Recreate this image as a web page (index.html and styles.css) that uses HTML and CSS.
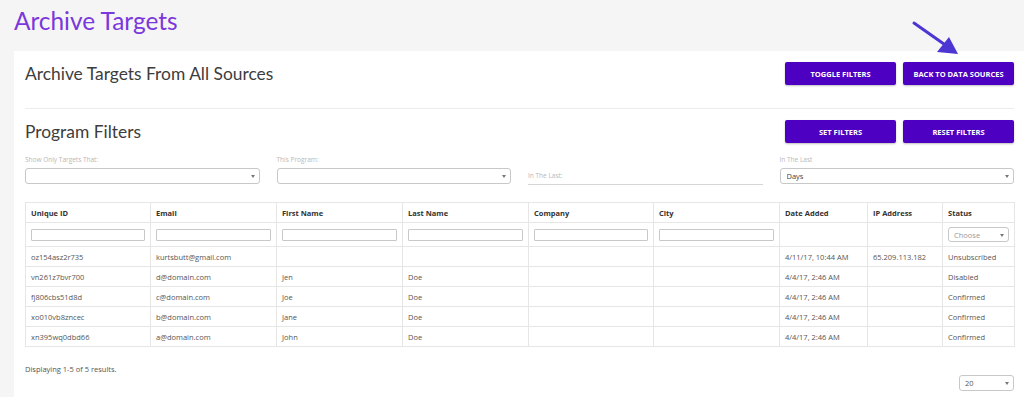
FILE: index.html
```html
<!DOCTYPE html>
<html lang="en">
<head>
<meta charset="utf-8">
<title>Archive Targets</title>
<link rel="stylesheet" href="styles.css">
</head>
<body>
<h1 class="page-title">Archive Targets</h1>
<svg class="pointer-arrow" width="60" height="45" viewBox="0 0 60 45" aria-hidden="true">
  <line x1="3" y1="3" x2="40" y2="29" stroke="#4b36d3" stroke-width="3" stroke-linecap="round"/>
  <polygon points="47,34 26,32 38,17" fill="#4b36d3"/>
</svg>
<main class="card">
  <section class="section-head">
    <h2 class="section-title">Archive Targets From All Sources</h2>
    <div class="btn-group">
      <button class="btn">TOGGLE FILTERS</button>
      <button class="btn">BACK TO DATA SOURCES</button>
    </div>
  </section>
  <section class="section-head filters-head">
    <h2 class="section-title">Program Filters</h2>
    <div class="btn-group">
      <button class="btn">SET FILTERS</button>
      <button class="btn">RESET FILTERS</button>
    </div>
  </section>
  <div class="filters">
    <div class="field">
      <label class="field-label">Show Only Targets That:</label>
      <div class="select-wrap"><select class="select"><option></option></select></div>
    </div>
    <div class="field">
      <label class="field-label">This Program:</label>
      <div class="select-wrap"><select class="select"><option></option></select></div>
    </div>
    <div class="field field-bottom">
      <div class="line-input"><span class="placeholder">In The Last:</span></div>
    </div>
    <div class="field">
      <label class="field-label">In The Last</label>
      <div class="select-wrap"><select class="select dark"><option>Days</option></select></div>
    </div>
  </div>

  <table class="grid">
    <colgroup>
      <col style="width:125px"><col style="width:126px"><col style="width:126px"><col style="width:126px">
      <col style="width:125px"><col style="width:126px"><col style="width:88px"><col style="width:75px"><col style="width:72px">
    </colgroup>
    <thead>
      <tr class="head-row">
        <th>Unique ID</th><th>Email</th><th>First Name</th><th>Last Name</th><th>Company</th><th>City</th><th>Date Added</th><th>IP Address</th><th>Status</th>
      </tr>
      <tr class="filter-row">
        <td><input class="cell-input" type="text"></td>
        <td><input class="cell-input" type="text"></td>
        <td><input class="cell-input" type="text"></td>
        <td><input class="cell-input" type="text"></td>
        <td><input class="cell-input" type="text"></td>
        <td><input class="cell-input" type="text"></td>
        <td></td>
        <td></td>
        <td><div class="select-wrap small"><select class="select"><option>Choose</option></select></div></td>
      </tr>
    </thead>
    <tbody>
      <tr><td>oz154asz2r735</td><td>kurtsbutt@gmail.com</td><td></td><td></td><td></td><td></td><td>4/11/17, 10:44 AM</td><td>65.209.113.182</td><td>Unsubscribed</td></tr>
      <tr><td>vn261z7bvr700</td><td>d@domain.com</td><td>Jen</td><td>Doe</td><td></td><td></td><td>4/4/17, 2:46 AM</td><td></td><td>Disabled</td></tr>
      <tr><td>fj806cbs51d8d</td><td>c@domain.com</td><td>Joe</td><td>Doe</td><td></td><td></td><td>4/4/17, 2:46 AM</td><td></td><td>Confirmed</td></tr>
      <tr><td>xo010vb8zncec</td><td>b@domain.com</td><td>Jane</td><td>Doe</td><td></td><td></td><td>4/4/17, 2:46 AM</td><td></td><td>Confirmed</td></tr>
      <tr><td>xn395wq0dbd66</td><td>a@domain.com</td><td>John</td><td>Doe</td><td></td><td></td><td>4/4/17, 2:46 AM</td><td></td><td>Confirmed</td></tr>
    </tbody>
  </table>

  <div class="results">Displaying 1-5 of 5 results.</div>
  <div class="pager">
    <div class="select-wrap per-page"><select class="select"><option>20</option></select></div>
  </div>
</main>
</body>
</html>
```

FILE: styles.css
```css
* { box-sizing: border-box; }

html, body {
  margin: 0;
  padding: 0;
  background: #f5f5f5;
  font-family: "Open Sans", "Liberation Sans", sans-serif;
  color: #555;
}

body {
  position: relative;
  height: 397px;
  overflow: hidden;
}

.page-title {
  margin: 0;
  height: 51px;
  padding: 6px 0 0 14px;
  font-family: Lato, "Open Sans", sans-serif;
  font-weight: 400;
  font-size: 24.4px;
  line-height: 30px;
  color: #7a38dc;
}

.pointer-arrow {
  position: absolute;
  left: 911px;
  top: 20px;
}

.card {
  margin-left: 14px;
  background: #fff;
  padding: 0 10px 7px 11px;
}

.section-head {
  display: flex;
  justify-content: space-between;
  align-items: center;
  padding-top: 11px;
  padding-bottom: 23px;
  border-bottom: 1px solid #ececec;
}

.filters-head {
  border-bottom: none;
  padding-bottom: 0;
}

.section-title {
  margin: 0;
  font-family: Lato, "Open Sans", sans-serif;
  font-weight: 400;
  font-size: 17.4px;
  color: #3d3d3d;
}

.btn-group {
  display: flex;
  gap: 7px;
}

.btn {
  width: 111px;
  height: 23px;
  padding: 0;
  border: none;
  border-radius: 2px;
  background: #4d00c2;
  color: #fff;
  font-family: "Open Sans", sans-serif;
  font-weight: 700;
  font-size: 7.5px;
  box-shadow: 0 1px 2px rgba(0,0,0,0.25);
}

.filters {
  display: grid;
  grid-template-columns: repeat(4, 1fr);
  column-gap: 17px;
  margin-top: 12px;
  align-items: end;
}

.field {
  display: flex;
  flex-direction: column;
}

.field-label {
  font-size: 6.5px;
  line-height: 10px;
  color: #b8b8b8;
  margin-bottom: 3px;
}

.select-wrap {
  position: relative;
}

.select-wrap::after {
  content: "";
  position: absolute;
  right: 5px;
  top: 50%;
  margin-top: -1px;
  border-left: 2.5px solid transparent;
  border-right: 2.5px solid transparent;
  border-top: 3px solid #777;
  pointer-events: none;
}

.select {
  -webkit-appearance: none;
  appearance: none;
  display: block;
  width: 100%;
  height: 16px;
  margin: 0;
  padding: 0 6px;
  border: 1px solid #c8c8c8;
  border-radius: 3px;
  background: #fff;
  font-family: "Open Sans", sans-serif;
  font-size: 7.5px;
  color: #999;
}

.select.dark {
  color: #444;
}

.line-input {
  display: flex;
  align-items: center;
  width: 100%;
  height: 18px;
  margin-bottom: -1px;
  border-bottom: 1px solid #d5d5d5;
  font-size: 6.5px;
  color: #b8b8b8;
}

.grid {
  margin-top: 18px;
  width: 989px;
  border-collapse: collapse;
  table-layout: fixed;
  font-size: 7.5px;
}

.grid th,
.grid td {
  border: 1px solid #e6e6e6;
  padding: 0 5px;
  height: 20px;
  text-align: left;
  white-space: nowrap;
  overflow: hidden;
}

.grid th {
  font-weight: 700;
  color: #333;
}

.grid td {
  color: #555;
}

.filter-row td {
  height: 24px;
}

.cell-input {
  display: block;
  width: 100%;
  height: 12px;
  margin: 0;
  padding: 0;
  border: 1px solid #c8c8c8;
  border-radius: 1px;
}

.select-wrap.small .select {
  height: 15px;
  padding-left: 5px;
  font-size: 7.5px;
}

.results {
  margin-top: 17px;
  font-size: 7.5px;
  color: #555;
}

.pager {
  display: flex;
  justify-content: flex-end;
  margin-top: 1px;
}

.per-page {
  width: 55px;
}

.per-page .select {
  height: 16px;
  padding-left: 5px;
  color: #555;
}
```
